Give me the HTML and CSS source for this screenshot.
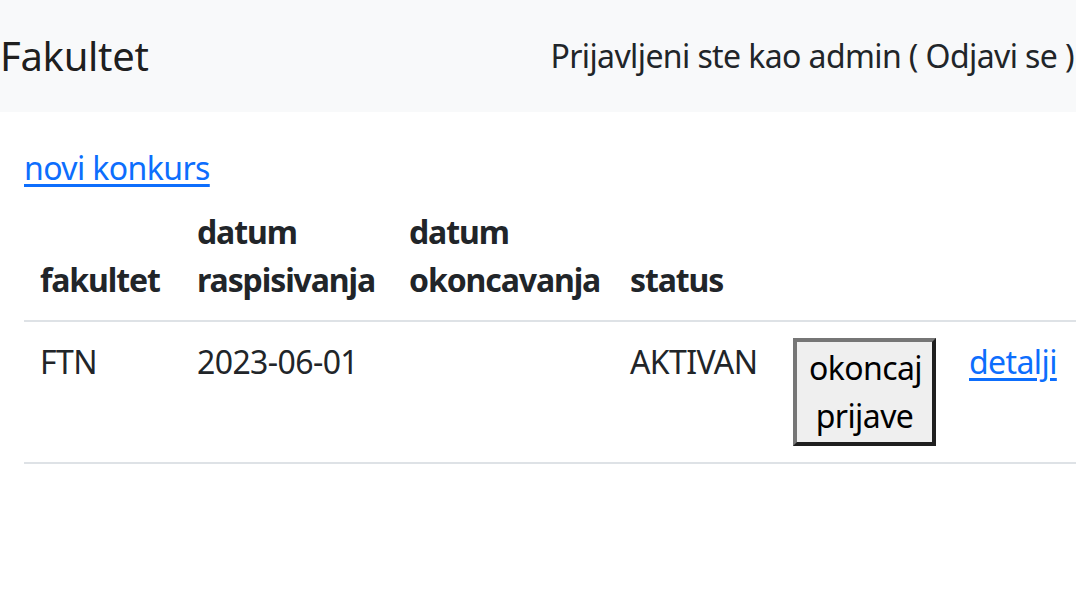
FILE: index.html
```html
<!DOCTYPE html>
<html lang="sr">
<head>
<meta charset="utf-8">
<title>Fakultet</title>
<link rel="stylesheet" href="styles.css">
</head>
<body>
<nav class="navbar">
  <span class="brand">Fakultet</span>
  <span class="user">Prijavljeni ste kao admin ( Odjavi se )</span>
</nav>
<main class="content">
  <div class="actions"><a href="#" class="link">novi konkurs</a></div>
  <table class="grid">
    <colgroup>
      <col class="c1"><col class="c2"><col class="c3"><col class="c4"><col class="c5"><col class="c6">
    </colgroup>
    <thead>
      <tr>
        <th>fakultet</th>
        <th>datum raspisivanja</th>
        <th>datum okoncavanja</th>
        <th>status</th>
        <th></th>
        <th></th>
      </tr>
    </thead>
    <tbody>
      <tr>
        <td>FTN</td>
        <td>2023-06-01</td>
        <td></td>
        <td>AKTIVAN</td>
        <td><button class="btn">okoncaj prijave</button></td>
        <td><a href="#" class="link">detalji</a></td>
      </tr>
    </tbody>
  </table>
</main>
</body>
</html>
```
FILE: styles.css
```css
html, body {
  margin: 0;
  padding: 0;
}
body {
  font-family: "Noto Sans", "Open Sans", sans-serif;
  font-size: 32px;
  line-height: 1.5;
  letter-spacing: -0.6px;
  color: #212529;
  background: #fff;
  width: 1076px;
  overflow: hidden;
}
.navbar {
  background: #f8f9fa;
  display: flex;
  justify-content: space-between;
  align-items: center;
  padding: 16px 0;
  height: 80px;
}
.brand {
  font-size: 40px;
  line-height: 60px;
  padding: 10px 0;
  letter-spacing: -0.3px;
  color: rgba(0,0,0,0.9);
}
.user {
  color: #212529;
  padding-right: 2px;
}
.content {
  padding: 32px 24px 0;
}
.actions {
  height: 48px;
}
.link {
  color: #0d6efd;
  text-decoration: underline;
  text-underline-offset: 4px;
}
.grid {
  border-collapse: collapse;
  table-layout: fixed;
  width: 1052px;
  vertical-align: top;
}
.c1 { width: 157px; }
.c2 { width: 212px; }
.c3 { width: 221px; }
.c4 { width: 163px; }
.c5 { width: 176px; }
.c6 { width: 123px; }
.grid th, .grid td {
  padding: 16px;
  text-align: left;
  border-bottom: 2px solid #dee2e6;
}
.grid thead th {
  vertical-align: bottom;
  font-weight: bold;
  letter-spacing: -1.1px;
}
.grid tbody td {
  vertical-align: top;
}
.btn {
  font: inherit;
  line-height: 1.5;
  letter-spacing: -0.6px;
  color: #000;
  background: #efefef;
  border: 4px solid;
  border-color: #767676 #1f1f1f #1f1f1f #767676;
  padding: 2px 12px;
  margin: 0;
  width: 143px;
}
```
